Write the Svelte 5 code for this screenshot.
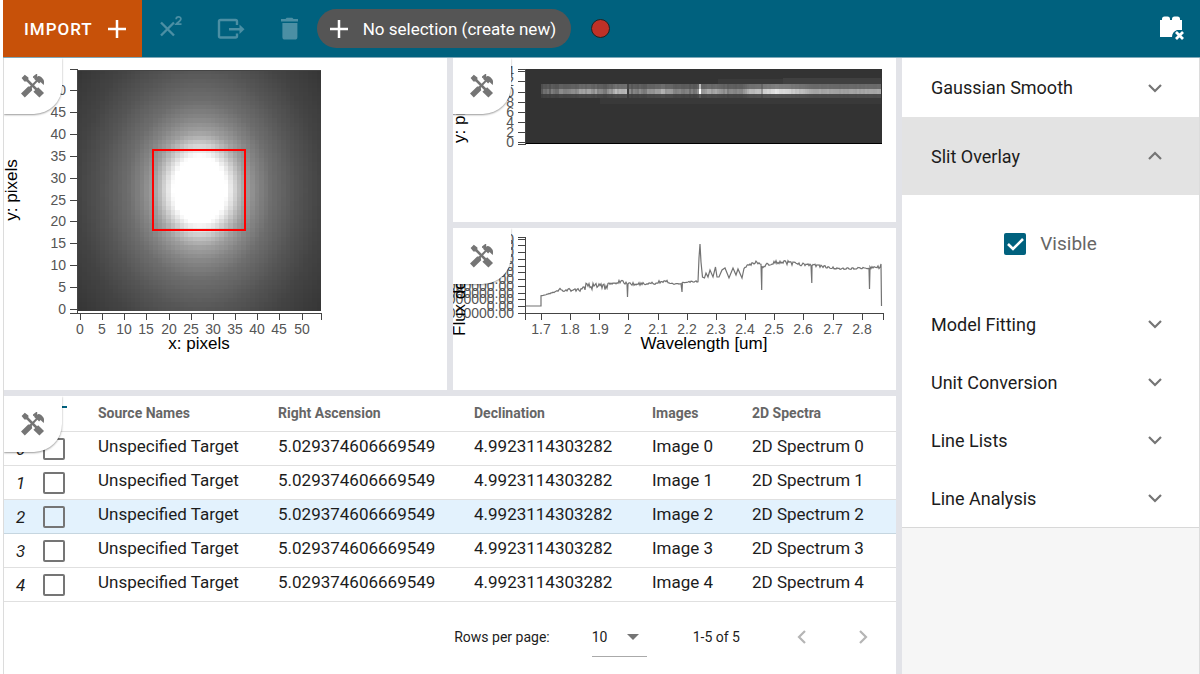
<script>
  let visible = $state(true);
  let rowsPerPage = $state('10');

  const rows = [0, 1, 2, 3, 4];
  const active = 2;

  // repeatable pseudo-random values in 0..1
  function makeRandom(seed) {
    let s = seed;
    return () => {
      s = (s * 1664525 + 1013904223) % 4294967296;
      return s / 4294967296;
    };
  }

  function interpolate(points, x) {
    for (let i = 1; i < points.length; i++) {
      if (x <= points[i][0]) {
        const [x0, y0] = points[i - 1];
        const [x1, y1] = points[i];
        return y0 + ((y1 - y0) * (x - x0)) / (x1 - x0 || 1);
      }
    }
    return points[points.length - 1][1];
  }

  const grey = (v) => {
    const c = Math.round(Math.max(0, Math.min(255, v)));
    return `rgb(${c},${c},${c})`;
  };

  // image cutout, 55 x 55 pixels, brightness by distance from the core
  const size = 55;
  const cw = 243 / size;
  const ch = 241 / size;
  const glow = [[0, 1], [0.97, 1], [1.2, 0.87], [1.45, 0.73], [1.7, 0.62], [2.1, 0.52], [2.6, 0.43], [3.5, 0.335], [4.4, 0.265], [5.8, 0.2]];
  const cells = [];
  for (let j = 0; j < size; j++) {
    for (let i = 0; i < size; i++) {
      const x = 78 + i * cw;
      const y = 70 + j * ch;
      const r = Math.hypot((x + 2 - 199.5) / 27.5, (y + 2 - 189.5) / 34.5);
      cells.push({ x, y, fill: grey(interpolate(glow, r) * 255) });
    }
  }

  const imageX = Array.from({ length: 11 }, (_, i) => ({ v: i * 5, p: Math.round(80 + i * 22.15) }));
  const imageY = Array.from({ length: 11 }, (_, i) => ({ v: i * 5, p: Math.round(309 - i * 21.9) }));

  // two-dimensional spectrum trace
  const rand2d = makeRandom(7);
  const profile = [
    [541, 95], [553, 120], [575, 135], [582, 165], [605, 130], [615, 175], [626, 185], [631, 120],
    [645, 130], [660, 175], [675, 130], [690, 115], [697, 130], [702, 165], [718, 160], [728, 130],
    [740, 140], [750, 180], [765, 205], [775, 225], [790, 205], [810, 170], [840, 160], [881, 168]
  ];
  const trace = [];
  for (let x = 541; x < 881; x += 2) {
    let v = interpolate(profile, x) + (rand2d() - 0.5) * (x < 750 ? 30 : 10);
    if (x === 627) v = 60;
    if (x === 699) v = 255;
    if (x === 761) v = 150;
    trace.push({ x, core: grey(v), upper: grey(x === 699 ? 190 : 46 + v * 0.36), lower: grey(48 + v * 0.16) });
  }
  const spec2dY = Array.from({ length: 8 }, (_, i) => ({ v: i * 2, p: Math.round(142 - i * 10.1) }));

  // one-dimensional spectrum
  const rand1d = makeRandom(23);
  const flux = [
    [541, 296, 0.6], [555, 292, 1], [560, 290, 3.5], [581, 290, 3], [584, 286, 8], [605, 287, 6],
    [610, 284, 3], [622, 281, 3], [628, 284, 3], [650, 284, 3], [665, 281, 3], [675, 284, 1.5],
    [698, 281, 2]
  ];
  const fluxRight = [
    [744, 269, 1], [748, 265, 2], [757, 262, 3], [763, 267, 2], [770, 263, 4], [783, 262, 5],
    [797, 265, 5], [812, 265, 3], [827, 267, 2], [840, 269, 2], [869, 268, 2], [880, 267, 3]
  ];
  const part = (points) => {
    const out = [];
    const base = points.map((p) => [p[0], p[1]]);
    const noise = points.map((p) => [p[0], p[2]]);
    for (let x = points[0][0]; x <= points[points.length - 1][0]; x += 1) {
      let y = interpolate(base, x) + (rand1d() - 0.5) * interpolate(noise, x);
      out.push([x, y]);
      if (x === 627) out.push([627.5, 297], [628, 284]);
      if (x === 681) out.push([682, 292], [682.4, 284]);
      if (x === 761) out.push([761.7, 290], [762, 266]);
      if (x === 811) out.push([811.8, 283], [812, 266]);
      if (x === 869) out.push([869.5, 289], [870, 268]);
    }
    return out;
  };
  const ripple = [
    [699, 258], [700, 244], [701, 262], [702.5, 277], [704.5, 278], [706, 273], [708, 277], [710, 270],
    [713, 277], [715.5, 267], [717, 277], [719, 277], [722, 270], [725, 268], [729, 278], [733, 268],
    [736, 275], [738, 269], [742, 278]
  ];
  const line = [[526, 306], [541, 306], ...part(flux), ...ripple, ...part(fluxRight), [881, 264], [881.5, 306]]
    .map((p) => `${p[0]},${p[1].toFixed(1)}`)
    .join(' ');

  const waveTicks = Array.from({ length: 12 }, (_, i) => ({
    v: String(Math.round(17 + i) / 10),
    p: Math.round(541 + i * 29.15)
  }));
  const fluxTicks = Array.from({ length: 12 }, (_, i) => ({
    v: i === 1 ? '0.00' : `${(i - 1) * 10000000}.00`,
    p: Math.round(313 - i * 6.77)
  }));
  const later = ['Model Fitting', 'Unit Conversion', 'Line Lists', 'Line Analysis'];
</script>

{#snippet tools()}
  <button class="tools" aria-label="Tools">
    <svg width="24" height="24" viewBox="0 0 24 24" fill="#757575">
      <path d="M.6 4 3.8.8l3.6 2.6v2.2l9 9-1.8 1.8-9-9H3.4z" />
      <path d="m12.4 17.8 4.8-4.6 5.8 5.8-4.6 4.6z" />
      <path d="m0 19.4 7.2-6.8h1.6l6-6-1.6-1.6V3.6L12 4.2V2.6L15.2 0h1v2.8l1.2-.9c1.9 0 4.6 2.2 5.3 4.2.5 1.6.4 3.2 0 5l-3.2-3-1.4 1.4-1.7-1.7-5.6 6 .4 2.4-7.4 7.2z" />
    </svg>
  </button>
{/snippet}

{#snippet chevron(d, color)}
  <svg width="24" height="24" viewBox="0 0 24 24" fill="none" stroke={color} stroke-width="2.2"><path {d} /></svg>
{/snippet}

<div class="app">
  <header>
    <button class="import">IMPORT
      <svg width="18" height="18" viewBox="0 0 18 18" stroke="#fff" stroke-width="2.5"><path d="M9 0v18M0 9h18" /></svg>
    </button>
    <div class="actions">
      <button aria-label="Superscript" disabled>
        <svg width="28" height="28" viewBox="0 0 28 28" fill="none" stroke="#4b8fa4">
          <path stroke-width="2.4" d="m3 7.500 13 13M16 7.500l-13 13" />
          <path stroke-width="1.8" d="M18.200 4.200c0-3.200 4.700-3 4.700-.3 0 1.900-2.800 3.200-4.600 5.200h5.200" />
        </svg>
      </button>
      <button aria-label="Export" disabled>
        <svg width="28" height="28" viewBox="0 0 28 28" fill="none" stroke="#4b8fa4">
          <path stroke-width="2.4" d="M20 10V6.500Q20 5 18.500 5H3.500Q2 5 2 6.500V21Q2 22.500 3.500 22.500h15q1.500 0 1.500-1.500v-2.500M12 14.200h11" />
          <path fill="#4b8fa4" stroke="none" d="m22.500 9.400 5 4.800-5 4.800z" />
        </svg>
      </button>
      <button aria-label="Delete" disabled>
        <svg width="28" height="28" viewBox="0 0 28 28" fill="#4b8fa4">
          <path d="M5 4h4.500l1.200-1.300h5.600L17.500 4H22v2.500H5zM6.400 8h15v14q0 2.600-2.600 2.600H9q-2.600 0-2.600-2.600z" />
        </svg>
      </button>
    </div>
    <button class="pill">
      <svg width="18" height="18" viewBox="0 0 18 18" stroke="#fff" stroke-width="2.5"><path d="M9 0v18M0 9h18" /></svg>
      No selection (create new)
    </button>
    <button class="dot" aria-label="Subset colour"></button>
    <button class="brick" aria-label="Clear regions">
      <svg width="25" height="25" viewBox="0 0 25 25">
        <path fill="#fff" d="M0 21V4h2V3q0-2.500 2.500-2.500h3Q10 .5 10 3v1h2V3q0-2.500 2.500-2.500h3Q20 .5 20 3v1h2v10H17q-5 2-5 7z" />
        <path stroke="#fff" stroke-width="2.800" d="m16 16 7 7m0-7-7 7" />
      </svg>
    </button>
  </header>

  <main>
    <div class="viewers">
      <div class="plots">
        <section class="panel">
          {@render tools()}
          <svg class="chart" viewBox="4 58 443 332">
            <g shape-rendering="crispEdges">
              {#each cells as c}
                <rect x={c.x} y={c.y} width={cw + 0.4} height={ch + 0.4} fill={c.fill} />
              {/each}
              <path class="axis" d="M78 70.500h243M70 69.500h7.500V313M70 313.500h251.500v6" />
              <rect x="153" y="150" width="92" height="80" fill="none" stroke="#f00" stroke-width="2" />
              {#each imageX as t}<path class="axis" d="M{t.p + 0.5} 314v6" />{/each}
              {#each imageY as t}<path class="axis" d="M70 {t.p + 0.5}h7" />{/each}
            </g>
            {#each imageX as t}<text class="tick" x={t.p} y="334" text-anchor="middle">{t.v}</text>{/each}
            {#each imageY as t}<text class="tick" x="66" y={t.p + 5} text-anchor="end">{t.v}</text>{/each}
            <text class="name" x="199" y="349" text-anchor="middle">x: pixels</text>
            <text class="name" transform="translate(17 190) rotate(-90)" text-anchor="middle">y: pixels</text>
          </svg>
        </section>

        <div class="stack">
          <section class="panel">
            {@render tools()}
            <svg class="chart" viewBox="453 58 443 164">
              <g shape-rendering="crispEdges">
                <rect x="526" y="69" width="356" height="74" fill="#333" />
                <rect x="783" y="78" width="98" height="6" fill="#404040" />
                <rect x="718" y="79" width="65" height="5" fill="#3a3a3a" />
                <rect x="600" y="98" width="281" height="6" fill="#393939" />
                {#each trace as t}
                  <rect x={t.x} y="84" width="2" height="5" fill={t.upper} />
                  <rect x={t.x} y="89" width="2" height="5" fill={t.core} />
                  <rect x={t.x} y="94" width="2" height="4" fill={t.lower} />
                {/each}
                <path class="axis" d="M518 69.500h7.500V144M518 144.500h8" />
                <path stroke="#000" d="M526 143.500h356" />
                {#each spec2dY as t}<path class="axis" d="M518 {t.p + 0.5}h7" />{/each}
              </g>
              {#each spec2dY as t}<text class="tick" x="514" y={t.p + 5} text-anchor="end">{t.v}</text>{/each}
              <text class="name" transform="translate(465 143) rotate(-90)">y: pixels</text>
            </svg>
          </section>

          <section class="panel">
            {@render tools()}
            <svg class="chart" viewBox="453 228 443 162">
              <g shape-rendering="crispEdges">
                <path class="axis" d="M518 237.500h7.500V320M518 313.500h365v6" />
                {#each waveTicks as t}<path class="axis" d="M{t.p + 0.5} 314v6" />{/each}
                {#each fluxTicks as t}<path class="axis" d="M518 {t.p + 0.5}h7" />{/each}
              </g>
              {#each waveTicks as t}<text class="tick" x={t.p} y="334" text-anchor="middle">{t.v}</text>{/each}
              {#each fluxTicks as t}<text class="tick" x="514" y={t.p + 5} text-anchor="end">{t.v}</text>{/each}
              <text class="name" x="704" y="349" text-anchor="middle">Wavelength [um]</text>
              <text class="name" transform="translate(465 336) rotate(-90)">Flux density</text>
              <polyline points={line} fill="none" stroke="#737373" stroke-width="1.200" />
            </svg>
          </section>
        </div>
      </div>

      <section class="panel data">
        {@render tools()}
        <table>
          <colgroup><col class="c-index" /><col class="c-check" /><col class="c-name" /><col class="c-ra" /><col class="c-dec" /><col class="c-img" /><col /></colgroup>
          <thead>
            <tr><th></th><th class="all"></th><th>Source Names</th><th>Right Ascension</th><th>Declination</th><th>Images</th><th>2D Spectra</th></tr>
          </thead>
          <tbody>
            {#each rows as n}
              <tr class:active={n === active}>
                <td class="index">{n}</td>
                <td class="check"><input type="checkbox" aria-label="Select row {n}" /></td>
                <td>Unspecified Target</td>
                <td>5.029374606669549</td>
                <td>4.9923114303282</td>
                <td>Image {n}</td>
                <td>2D Spectrum {n}</td>
              </tr>
            {/each}
          </tbody>
        </table>
        <footer>
          <label for="rows">Rows per page:</label>
          <div class="select">
            <select id="rows" bind:value={rowsPerPage}><option>10</option><option>25</option><option>50</option></select>
          </div>
          <span class="range">1-5 of 5</span>
          <button aria-label="Previous page" disabled>{@render chevron('m15 6-6 6 6 6', '#b5b5b5')}</button>
          <button aria-label="Next page" disabled>{@render chevron('m9 6 6 6-6 6', '#b5b5b5')}</button>
        </footer>
      </section>
    </div>

    <aside>
      <div class="plugins">
        <button class="item">Gaussian Smooth {@render chevron('m6 9 6 6 6-6', '#757575')}</button>
        <button class="item open">Slit Overlay {@render chevron('m6 15 6-6 6 6', '#757575')}</button>
        <div class="content">
          <label><input type="checkbox" bind:checked={visible} />Visible</label>
        </div>
        {#each later as name}
          <button class="item">{name} {@render chevron('m6 9 6 6 6-6', '#757575')}</button>
        {/each}
      </div>
    </aside>
  </main>
</div>

<style>
  :global(body) {
    margin: 0;
    background: #fff;
  }
  .app {
    display: flex;
    flex-direction: column;
    min-height: 100vh;
    box-sizing: border-box;
    padding-left: 3px;
    font-family: Roboto, sans-serif;
    color: #1c1c1c;
  }
  button {
    border: 0;
    padding: 0;
    background: none;
    font: inherit;
    color: inherit;
    display: flex;
    align-items: center;
  }
  svg {
    display: block;
    flex: none;
  }
  header {
    display: flex;
    align-items: center;
    height: 57px;
    background: #00617e;
    border-bottom: 1px solid #7fa9b9;
  }
  .import {
    align-self: stretch;
    gap: 15px;
    padding: 0 16px 0 21px;
    background: #c75109;
    color: #fff;
    font-size: 17px;
    font-weight: 500;
    letter-spacing: 1px;
  }
  .actions {
    display: flex;
    gap: 31px;
    padding: 0 13px 0 16px;
  }
  .pill {
    height: 39px;
    gap: 15px;
    padding: 0 15px 0 13px;
    border-radius: 20px;
    background: #555;
    color: #fff;
    font-size: 17px;
  }
  .dot {
    width: 19px;
    height: 19px;
    margin-left: 20px;
    box-sizing: border-box;
    border: 1px solid #222;
    border-radius: 50%;
    background: #bf3127;
  }
  .brick {
    margin: 0 15px 0 auto;
  }
  main {
    flex: 1;
    display: grid;
    grid-template-columns: minmax(0, 1fr) 297px;
    gap: 6px;
    border-left: 1px solid #dcdcdc;
    border-right: 1px solid #dcdcdc;
    background: #e2e3e8;
  }
  .viewers {
    display: flex;
    flex-direction: column;
    gap: 6px;
  }
  .plots {
    display: grid;
    grid-template-columns: 1fr 1fr;
    gap: 6px;
  }
  .stack {
    display: flex;
    flex-direction: column;
    gap: 6px;
  }
  .panel {
    position: relative;
    background: #fff;
    overflow: hidden;
  }
  .chart {
    width: 100%;
    height: auto;
    font-family: "Liberation Sans", sans-serif;
  }
  .axis {
    stroke: #444;
    fill: none;
  }
  .tick {
    font-size: 14px;
    fill: #555;
  }
  .name {
    font-size: 17px;
    fill: #000;
  }
  .tools {
    position: absolute;
    top: 0;
    left: 0;
    z-index: 1;
    width: 58px;
    height: 56px;
    justify-content: center;
    border-radius: 0 0 28px 0;
    background: #fff;
    box-shadow: 0 1px 2px rgba(0, 0, 0, 0.4);
  }
  .data {
    flex: 1;
  }
  table {
    width: 100%;
    table-layout: fixed;
    border-collapse: separate;
    border-spacing: 0;
    font-size: 17px;
  }
  .c-index { width: 32px; }
  .c-check { width: 46px; }
  .c-name { width: 180px; }
  .c-ra { width: 196px; }
  .c-dec { width: 178px; }
  .c-img { width: 100px; }
  th,
  td {
    box-sizing: border-box;
    height: 34px;
    padding: 0 0 6px 16px;
    border-bottom: 1px solid #e0e0e0;
    text-align: left;
    white-space: nowrap;
    line-height: 20px;
  }
  th {
    height: 36px;
    padding-bottom: 1px;
    font-size: 14px;
    font-weight: 700;
    color: #666;
  }
  .all {
    position: relative;
  }
  .all::after {
    content: "";
    position: absolute;
    top: 10px;
    right: 15px;
    width: 20px;
    height: 2px;
    background: #00617e;
  }
  .index {
    padding: 0 0 0 12px;
    font-style: italic;
  }
  .check {
    padding: 0 0 0 7px;
  }
  input {
    appearance: none;
    display: block;
    box-sizing: border-box;
    width: 22px;
    height: 22px;
    margin: 0;
    border: 2px solid #757575;
    border-radius: 2px;
  }
  input:checked {
    border: 0;
    background: #00617e url("data:image/svg+xml,%3Csvg xmlns='http://www.w3.org/2000/svg' viewBox='0 0 22 22'%3E%3Cpath d='m4 11 5 5L19 6' fill='none' stroke='white' stroke-width='2.6'/%3E%3C/svg%3E");
  }
  .active td {
    background: #e3f2fd;
    border-color: #c6d6e0;
  }
  footer {
    display: flex;
    align-items: center;
    justify-content: flex-end;
    height: 70px;
    padding-right: 21px;
    font-size: 14px;
  }
  .select {
    position: relative;
    margin: 0 46px 0 42px;
  }
  .select::after {
    content: "";
    position: absolute;
    right: 8px;
    top: 17px;
    border: 6px solid transparent;
    border-top-color: #757575;
    border-bottom: 0;
    pointer-events: none;
  }
  select {
    appearance: none;
    width: 55px;
    height: 40px;
    padding: 0;
    border: 0;
    border-bottom: 1px solid #aaa;
    border-radius: 0;
    background: none;
    font: inherit;
    color: inherit;
  }
  .range {
    margin-right: 50px;
  }
  footer button + button {
    margin-left: 37px;
  }
  aside {
    background: #f6f6f6;
  }
  .plugins {
    background: #fff;
    border-bottom: 1px solid #d8d8d8;
    font-size: 18px;
  }
  .item {
    width: 100%;
    height: 58px;
    box-sizing: border-box;
    padding: 0 32px 0 29px;
    justify-content: space-between;
  }
  .item:first-child {
    height: 59px;
  }
  .item.open {
    height: 78px;
    background: #e3e3e3;
  }
  .content {
    display: flex;
    justify-content: center;
    padding: 37px 0 39px;
  }
  .content label {
    display: flex;
    align-items: center;
    gap: 14px;
    font-size: 19px;
    line-height: 24px;
    color: #666;
  }
</style>
